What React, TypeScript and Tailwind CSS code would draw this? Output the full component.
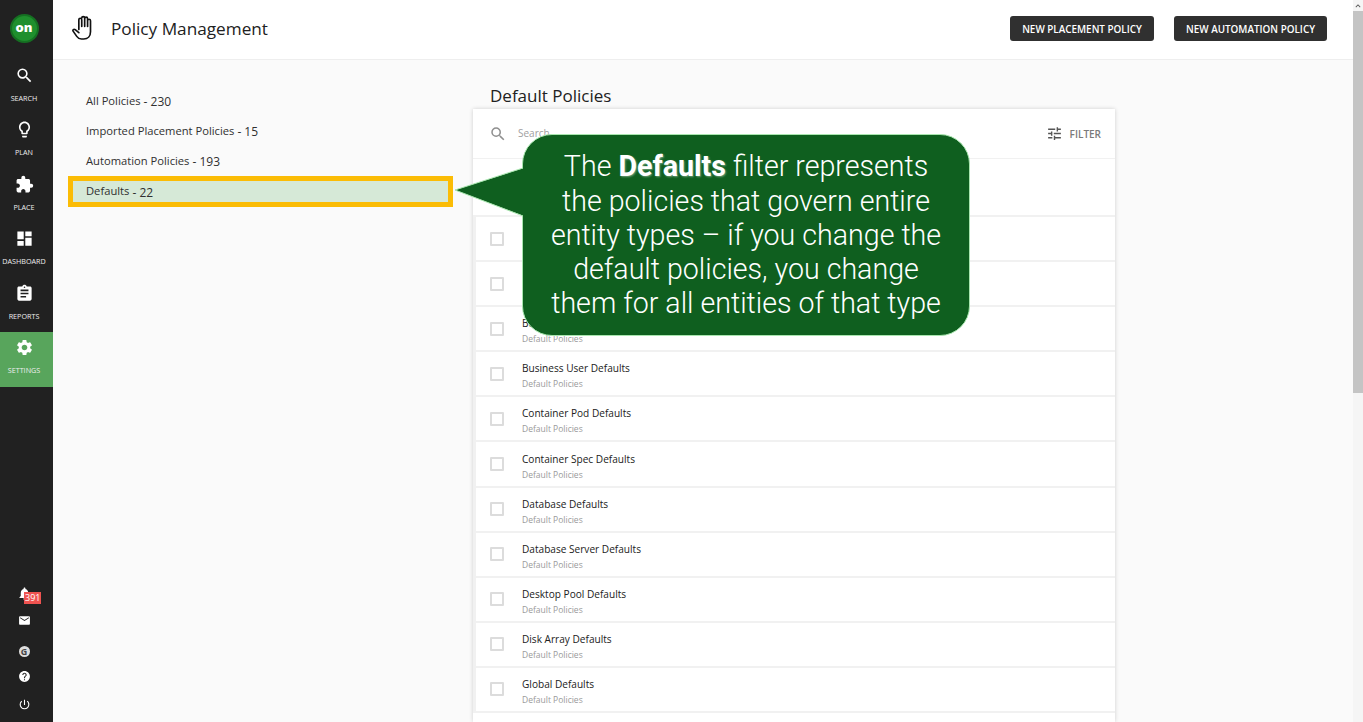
import { MdSearch, MdLightbulbOutline, MdExtension, MdDashboard, MdAssignment, MdSettings, MdMail, MdHelp, MdPowerSettingsNew, MdTune, MdNotifications, MdKeyboardArrowUp } from 'react-icons/md';

const navItems = [
  { label: 'SEARCH', icon: MdSearch },
  { label: 'PLAN', icon: MdLightbulbOutline },
  { label: 'PLACE', icon: MdExtension },
  { label: 'DASHBOARD', icon: MdDashboard },
  { label: 'REPORTS', icon: MdAssignment },
  { label: 'SETTINGS', icon: MdSettings, active: true },
];

const filters = [
  { label: 'All Policies', count: 230 },
  { label: 'Imported Placement Policies', count: 15 },
  { label: 'Automation Policies', count: 193 },
  { label: 'Defaults', count: 22, selected: true },
];

const rows = [
  'Business Application Defaults',
  'Business User Defaults',
  'Container Pod Defaults',
  'Container Spec Defaults',
  'Database Defaults',
  'Database Server Defaults',
  'Desktop Pool Defaults',
  'Disk Array Defaults',
  'Global Defaults',
];

function Sidebar() {
  return (
    <aside className="w-[53px] shrink-0 bg-[#212121] flex flex-col items-stretch text-white">
      <div className="h-[59.5px] shrink-0 flex items-center justify-center pb-[3px] pr-[5px]">
        <div className="w-[29px] h-[29px] rounded-full bg-[#1f8f2d] border-2 border-[#157022] flex items-center justify-center">
          <span className="text-[13px] font-extrabold leading-none text-white pb-[2px]">on</span>
        </div>
      </div>
      {navItems.map((item) => {
        const Icon = item.icon;
        return (
          <div
            key={item.label}
            className={`h-[54.5px] shrink-0 flex flex-col items-center pt-[6px] pr-[5px] ${item.active ? 'bg-[#58a55c]' : ''}`}
          >
            <Icon className="w-[19px] h-[19px] text-white" />
            <span className="text-[7.2px] leading-[10px] mt-[8px] text-[#eeeeee]">{item.label}</span>
          </div>
        );
      })}
      <div className="mt-auto flex flex-col items-center pb-[11px] pr-[5px]">
        <div className="relative h-[14px] w-[14px] mb-[14px]">
          <MdNotifications className="w-[15px] h-[15px] text-white" />
          <span className="absolute left-[7px] top-[6px] bg-[#ef5350] text-white text-[9px] leading-[12px] px-[1px]">391</span>
        </div>
        <MdMail className="w-[13px] h-[13px] text-white mb-[19px]" />
        <div className="w-[11px] h-[11px] rounded-full bg-[#dddddd] flex items-center justify-center mb-[13px]">
          <span className="text-[9px] font-bold leading-none text-[#444444]">G</span>
        </div>
        <MdHelp className="w-[13px] h-[13px] text-white mb-[15px]" />
        <MdPowerSettingsNew className="w-[13px] h-[13px] text-white" />
      </div>
    </aside>
  );
}

function HandIcon() {
  return (
    <svg className="w-[22px] h-[25px] mb-[4px] text-[#111111]" viewBox="0 0 21 24" fill="none" stroke="currentColor" strokeWidth="1.6" strokeLinecap="round" strokeLinejoin="round">
      <path d="M6.5 14V4.5a1.4 1.4 0 0 1 2.8 0V11M9.3 3a1.4 1.4 0 0 1 2.8 0v8M12.1 3.5a1.4 1.4 0 0 1 2.8 0V11M14.9 5.5a1.4 1.4 0 0 1 2.8 0V16c0 4-2.5 7-6.5 7H9c-2.5 0-3.5-1-4.5-2.5L1 15.5c-.6-1 .6-2.4 2-1.4l3.5 2.9" />
    </svg>
  );
}

function Header() {
  return (
    <header className="h-[60px] shrink-0 bg-white border-b border-[#eeeeee] flex items-center pl-[19px] pr-[26px]">
      <HandIcon />
      <h1 className="ml-[17px] text-[17.2px] leading-none text-[#212121] mb-[1px]">Policy Management</h1>
      <div className="ml-auto flex gap-[20px] mb-[3px]">
        <button className="h-[25px] w-[144px] pt-[3px] rounded-[3px] bg-[#303030] text-white text-[9.9px] font-semibold">NEW PLACEMENT POLICY</button>
        <button className="h-[25px] w-[153px] pt-[3px] rounded-[3px] bg-[#303030] text-white text-[9.9px] font-semibold">NEW AUTOMATION POLICY</button>
      </div>
    </header>
  );
}

function PolicyRow({ name }: { name?: string }) {
  return (
    <div className="h-[45.1px] shrink-0 border-b-2 border-l-[3px] border-[#f1f1f1] flex items-center pl-[14px]">
      <div className="w-[14px] h-[14px] border-2 border-[#dcdcdc] rounded-[1px]" />
      {name && (
        <div className="ml-[18px] flex flex-col pt-[4px]">
          <span className="text-[10.1px] leading-[14px] text-[#212121]">{name}</span>
          <span className="text-[8.5px] leading-[12px] mt-[3px] text-[#9a9a9a]">Default Policies</span>
        </div>
      )}
    </div>
  );
}

function Callout() {
  return (
    <div className="absolute left-[455px] top-[134px] flex items-start">
      <svg className="w-[69px] h-[202px] -mr-[2px] relative z-10" viewBox="0 0 69 202">
        <polygon points="0,56 69,34 69,82" fill="#0f5f1f" />
        <polyline points="68,34 0,56 68,82" fill="none" stroke="#a8e6ae" strokeWidth="1" />
      </svg>
      <div className="w-[448px] h-[202px] rounded-[30px] bg-[#0f5f1f] border border-[#a8e6ae] flex items-center justify-center text-center text-white font-[Roboto,sans-serif] font-light text-[28.6px] leading-[34.2px] whitespace-nowrap">
        <p>
          The <b className="font-bold [text-shadow:1px_1px_2px_rgba(255,255,255,0.4)]">Defaults</b> filter represents
          <br />
          the policies that govern entire
          <br />
          entity types – if you change the
          <br />
          default policies, you change
          <br />
          them for all entities of that type
        </p>
      </div>
    </div>
  );
}

export default function App() {
  return (
    <div className="relative flex h-[722px] w-[1363px] overflow-hidden bg-[#fafafa] font-['Open_Sans',sans-serif]">
      <Sidebar />
      <div className="flex-1 flex flex-col min-w-0">
        <Header />
        <div className="flex-1 flex min-h-0">
          {/* filter list */}
          <nav className="w-[385px] ml-[15px] shrink-0 pt-[26px]">
            {filters.map((f) =>
              <div
                key={f.label}
                className={`flex items-center text-[11.2px] text-[#303030] ${f.selected ? 'bg-[#d6e9d7] border-[5px] border-[#fbbc05] pl-[13px] h-[31px]' : 'h-[30px] pl-[18px]'}`}
              >
                <span>{f.label}</span>
                <span className="ml-[3px] text-[12px] translate-y-[1px]">- {f.count}</span>
              </div>
            )}
          </nav>
          <section className="ml-[20px] w-[642px] shrink-0 flex flex-col min-h-0">
            <h2 className="h-[49px] shrink-0 pl-[17px] pt-[23px] text-[17px] leading-[26px] text-[#212121]">Default Policies</h2>
            <div className="flex-1 min-h-0 overflow-hidden bg-white shadow-[0_0_4px_rgba(0,0,0,0.18)] flex flex-col">
              <div className="h-[50px] shrink-0 border-b border-[#f1f1f1] flex items-center pl-[16px] pr-[14px] text-[#8a8a8a]">
                <MdSearch className="w-[18px] h-[18px] text-[#8f8f8f]" />
                <span className="ml-[11px] text-[10px] text-[#a0a0a0]">Search</span>
                <MdTune className="ml-auto w-[17px] h-[17px] text-[#555555]" />
                <span className="ml-[7px] pt-[2px] text-[10px] font-semibold text-[#7a7a7a]">FILTER</span>
              </div>
              <div className="h-[58px] shrink-0 border-b-2 border-[#f1f1f1]" />
              {/* first two rows sit behind the callout */}
              <PolicyRow />
              <PolicyRow />
              {rows.map((name) => (
                <PolicyRow key={name} name={name} />
              ))}
            </div>
          </section>
        </div>
      </div>
      {/* page scrollbar */}
      <div className="w-[10px] shrink-0 bg-[#f5f5f5] flex flex-col">
        <div className="h-[11px] flex items-center justify-center">
          <MdKeyboardArrowUp className="w-[10px] h-[10px] text-[#555555]" />
        </div>
        <div className="h-[382px] bg-[#c4c4c4]" />
      </div>
      <Callout />
    </div>
  );
}
